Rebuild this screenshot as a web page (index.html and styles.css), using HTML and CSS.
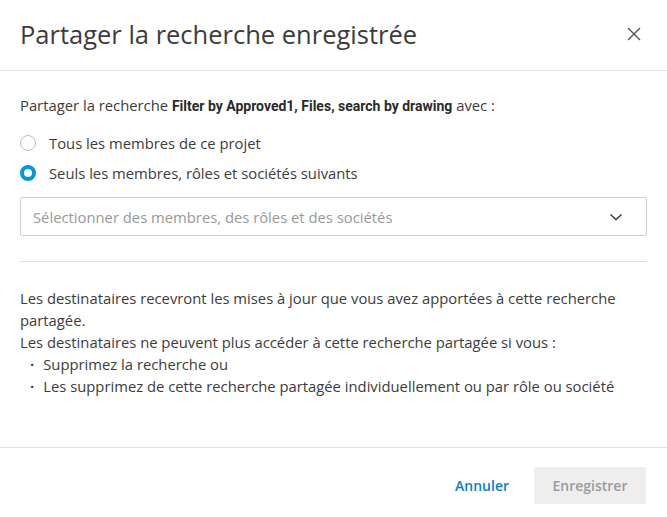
FILE: index.html
```html
<!DOCTYPE html>
<html lang="fr">
<head>
<meta charset="utf-8">
<link rel="stylesheet" href="styles.css">
</head>
<body>
<div class="dialog">
  <header class="header">
    <h1 class="title">Partager la recherche enregistrée</h1>
    <button class="close" aria-label="Fermer">
      <svg width="14" height="14" viewBox="0 0 14 14"><path d="M1 1L13 13M13 1L1 13" stroke="#555" stroke-width="1.4" fill="none"/></svg>
    </button>
  </header>
  <main class="body">
    <p class="intro">Partager la recherche <strong>Filter by Approved1, Files, search by drawing</strong> avec :</p>
    <div class="radios">
      <label class="radio"><span class="dot"></span><span>Tous les membres de ce projet</span></label>
      <label class="radio"><span class="dot checked"></span><span>Seuls les membres, rôles et sociétés suivants</span></label>
    </div>
    <div class="select">
      <span class="placeholder">Sélectionner des membres, des rôles et des sociétés</span>
      <svg width="14" height="8" viewBox="0 0 14 8"><path d="M1.5 1.5L7 6.5L12.5 1.5" stroke="#3c3c3c" stroke-width="1.5" fill="none"/></svg>
    </div>
    <hr class="divider">
    <div class="info">
      <p>Les destinataires recevront les mises à jour que vous avez apportées à cette recherche partagée.</p>
      <p>Les destinataires ne peuvent plus accéder à cette recherche partagée si vous :</p>
      <ul class="list">
        <li>Supprimez la recherche ou</li>
        <li>Les supprimez de cette recherche partagée individuellement ou par rôle ou société</li>
      </ul>
    </div>
  </main>
  <footer class="footer">
    <button class="btn link">Annuler</button>
    <button class="btn primary" disabled>Enregistrer</button>
  </footer>
</div>
</body>
</html>
```

FILE: styles.css
```css
* { box-sizing: border-box; }
html, body { margin: 0; padding: 0; background: #fff; }
body {
  font-family: "Open Sans", "Noto Sans", sans-serif;
  color: #3c3c3c;
  width: 667px;
  height: 517px;
  overflow: hidden;
}
.dialog {
  display: flex;
  flex-direction: column;
  height: 517px;
}
.header {
  height: 71px;
  display: flex;
  align-items: center;
  justify-content: space-between;
  padding: 0 20px 2px 20px;
  border-bottom: 1px solid #e4e4e4;
}
.title {
  margin: 0;
  font-size: 25.5px;
  font-weight: 400;
  color: #3c3c3c;
  line-height: 32px;
}
.close {
  border: 0;
  background: none;
  padding: 0;
  margin-right: 6px;
  width: 14px;
  height: 14px;
  display: flex;
}
.body {
  flex: 1;
  padding: 24px 20px 0 20px;
  font-size: 14.8px;
}
.intro {
  margin: 0;
  line-height: 20px;
}
.intro strong {
  font-family: Roboto, sans-serif;
  font-size: 14px;
  font-weight: 700;
  color: #2a2a2a;
}
.radios {
  margin-top: 17px;
  display: flex;
  flex-direction: column;
  gap: 10px;
}
.radio {
  display: flex;
  align-items: center;
  gap: 13px;
  height: 20px;
  line-height: 20px;
}
.dot {
  width: 16px;
  height: 16px;
  border-radius: 50%;
  border: 1px solid #bdbdbd;
  background: #fff;
  flex: none;
}
.dot.checked {
  border: 4px solid #0696d7;
}
.select {
  margin-top: 14px;
  height: 39px;
  border: 1px solid #cfcfcf;
  border-radius: 2px;
  display: flex;
  align-items: center;
  justify-content: space-between;
  padding: 0 23px 0 12px;
}
.placeholder { color: #999; }
.divider {
  margin: 25px 0 0 0;
  border: 0;
  border-top: 1px solid #e0e0e0;
}
.info {
  margin-top: 25px;
  line-height: 22px;
}
.info p { margin: 0; }
.list {
  margin: 0;
  padding: 0 0 0 10px;
  list-style: none;
}
.list li {
  display: flex;
  gap: 9px;
}
.list li::before {
  content: "·";
  font-weight: 700;
}
.footer {
  height: 70px;
  border-top: 1px solid #e0e0e0;
  display: flex;
  align-items: center;
  justify-content: flex-end;
  gap: 12px;
  padding: 6px 21px 0 20px;
}
.btn {
  font-family: inherit;
  font-size: 14px;
  border: 0;
  height: 37px;
  padding: 0 13px;
  border-radius: 2px;
  cursor: pointer;
}
.btn.link {
  background: none;
  color: #0a7fc1;
  font-weight: 600;
}
.btn.primary {
  background: #eeeeee;
  color: #9a9a9a;
  font-weight: 600;
  width: 112px;
}
```
